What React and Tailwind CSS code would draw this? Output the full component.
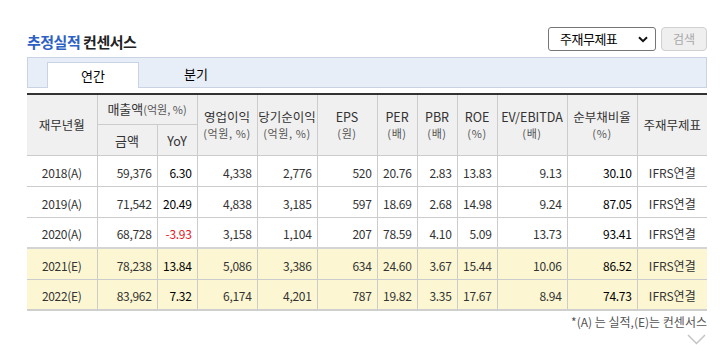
import React from 'react';

const rows = [
  { ym: '2018(A)', sales: '59,376', yoy: '6.30', op: '4,338', net: '2,776', eps: '520', per: '20.76', pbr: '2.83', roe: '13.83', ev: '9.13', debt: '30.10', est: false },
  { ym: '2019(A)', sales: '71,542', yoy: '20.49', op: '4,838', net: '3,185', eps: '597', per: '18.69', pbr: '2.68', roe: '14.98', ev: '9.24', debt: '87.05', est: false },
  { ym: '2020(A)', sales: '68,728', yoy: '-3.93', op: '3,158', net: '1,104', eps: '207', per: '78.59', pbr: '4.10', roe: '5.09', ev: '13.73', debt: '93.41', est: false },
  { ym: '2021(E)', sales: '78,238', yoy: '13.84', op: '5,086', net: '3,386', eps: '634', per: '24.60', pbr: '3.67', roe: '15.44', ev: '10.06', debt: '86.52', est: true },
  { ym: '2022(E)', sales: '83,962', yoy: '7.32', op: '6,174', net: '4,201', eps: '787', per: '19.82', pbr: '3.35', roe: '17.67', ev: '8.94', debt: '74.73', est: true },
];

const widths = [70, 60, 40, 60, 60, 60, 40, 40, 40, 70, 70, 70];

const th = 'border border-[#cccccc] bg-[#f0f0f0] font-normal text-[12.5px] text-[#333] leading-[16px] text-center align-middle';
const sub = 'block text-[11px] tracking-[0.6px] text-[#555]';

const HeadCell = ({ main, unit, rowSpan, last }) => (
  <th rowSpan={rowSpan} className={`${th} ${last ? 'border-r-0' : ''}`}>
    {main}
    {unit && <span className={sub}>{unit}</span>}
  </th>
);

const App = () => {
  return (
    <div className="w-[725px] h-[345px] overflow-hidden bg-white font-['Noto_Sans_CJK_KR',sans-serif]">
      <div className="ml-[27px] w-[680px] pt-[27px]">
        {/* Title and filter */}
        <div className="flex items-center justify-between h-[24px]">
          <h2 className="text-[15px] font-bold tracking-[-0.5px] leading-[24px] pt-[6px] text-[#222]">
            <span className="text-[#2d61c4]">추정실적</span> 컨센서스
          </h2>
          <div className="flex gap-[5px]">
            <div className="w-[108px] h-[24px] border border-[#767676] rounded-[3px] flex items-center justify-between pl-[11px] pr-[7px] text-[13px] text-black">
              <span className="tracking-[-0.5px]">주재무제표</span>
              <svg width="10" height="7" viewBox="0 0 10 7">
                <path d="M1 1.2 L5 5.2 L9 1.2" fill="none" stroke="#111" strokeWidth="2" />
              </svg>
            </div>
            <button className="w-[46px] h-[24px] border border-[#d0d0d0] bg-[#efefef] rounded-[4px] text-[12px] text-[#a8a8a8]">
              검색
            </button>
          </div>
        </div>

        {/* Tabs */}
        <div className="mt-[6px] h-[31px] bg-[#e8eef8] border border-[#c9d3e3] flex items-end pl-[19px]">
          <div className="w-[92px] h-[26px] -mb-px bg-white border border-b-0 border-[#c9d3e3] flex items-center justify-center text-[13px] text-black">
            연간
          </div>
          <div className="ml-[11px] w-[92px] h-[26px] flex items-center justify-center text-[13px] text-black">
            분기
          </div>
        </div>

        {/* Table */}
        <table className="mt-[5px] w-[680px] table-fixed border-collapse border-t-2 border-t-[#333]">
          <colgroup>
            {widths.map((w, i) => (
              <col key={i} style={{ width: w }} />
            ))}
          </colgroup>
          <thead>
            <tr className="h-[30px]">
              <th rowSpan={2} className={`${th} border-l-0`}>재무년월</th>
              <th colSpan={2} className={`${th} text-[13px]`}>
                매출액<span className="text-[11px] text-[#555]">(억원, %)</span>
              </th>
              <HeadCell rowSpan={2} main="영업이익" unit="(억원, %)" />
              <HeadCell rowSpan={2} main="당기순이익" unit="(억원, %)" />
              <HeadCell rowSpan={2} main="EPS" unit="(원)" />
              <HeadCell rowSpan={2} main="PER" unit="(배)" />
              <HeadCell rowSpan={2} main="PBR" unit="(배)" />
              <HeadCell rowSpan={2} main="ROE" unit="(%)" />
              <HeadCell rowSpan={2} main="EV/EBITDA" unit="(배)" />
              <HeadCell rowSpan={2} main="순부채비율" unit="(%)" />
              <HeadCell rowSpan={2} main="주재무제표" last />
            </tr>
            <tr className="h-[31px]">
              <th className={`${th} text-[13px] pt-[2px]`}>금액</th>
              <th className={`${th} pt-[2px]`}>YoY</th>
            </tr>
          </thead>
          <tbody>
            {rows.map((r, i) => {
              const bg = r.est ? 'bg-[#fcf7d2]' : 'bg-white';
              const topEdge = i === 3 ? 'border-t-2 border-t-[#d4d4d4]' : '';
              const bottomEdge = i === rows.length - 1 ? 'border-b-2 border-b-[#cfcfcf]' : '';
              const td = `border border-[#cccccc] pt-[4px] text-[12px] leading-none tracking-[-0.3px] text-[#333] ${topEdge} ${bottomEdge}`;
              const num = `${td} text-right pr-[5px]`;
              return (
                <tr key={r.ym} className={`h-[31px] ${bg}`}>
                  <td className={`${td} border-l-0 text-center`}>{r.ym}</td>
                  <td className={num}>{r.sales}</td>
                  <td className={`${num} ${r.yoy.startsWith('-') ? 'text-[#e3151d]' : 'text-black'}`}>{r.yoy}</td>
                  <td className={num}>{r.op}</td>
                  <td className={num}>{r.net}</td>
                  <td className={num}>{r.eps}</td>
                  <td className={num}>{r.per}</td>
                  <td className={num}>{r.pbr}</td>
                  <td className={num}>{r.roe}</td>
                  <td className={num}>{r.ev}</td>
                  <td className={`${num} text-black`}>{r.debt}</td>
                  <td className={`${td} border-r-0 text-center tracking-normal`}>IFRS연결</td>
                </tr>
              );
            })}
          </tbody>
        </table>

        {/* Footnote */}
        <p className="mt-[4px] text-right text-[12px] leading-[14px] text-[#555]">*(A) 는 실적,(E)는 컨센서스</p>
        <div className="flex justify-end pr-[1px] mt-[5px]">
          <svg width="19" height="11" viewBox="0 0 19 11">
            <path d="M1 1 L9.5 9.5 L18 1" fill="none" stroke="#c4c4c4" strokeWidth="1.5" />
          </svg>
        </div>
      </div>
    </div>
  );
};

export default App;
